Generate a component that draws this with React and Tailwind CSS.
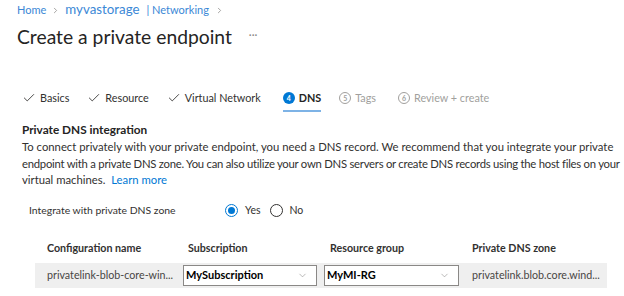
import { ChevronRight, ChevronDown, Check } from 'lucide-react';

const font = { fontFamily: 'Lato, "Noto Sans", sans-serif' };

const Step = ({ done, num, label, active, muted, className = '' }) => (
  <div className={`relative flex items-center gap-[4px] h-[26px] ${muted ? 'text-[#a19f9d]' : 'text-[#323130]'} ${className}`}>
    {done && <Check className="w-[14px] h-[14px]" strokeWidth={1.5} />}
    {num && (
      <span
        className={`flex items-center justify-center w-[12px] h-[12px] rounded-full text-[7px] font-bold ${
          active ? 'bg-[#0078d4] text-white' : 'border border-[#a19f9d] text-[#a19f9d]'
        }`}
      >
        {num}
      </span>
    )}
    <span className={`text-[10.8px] ${active ? 'font-bold text-[#252423]' : ''}`}>{label}</span>
    {active && <span className="absolute left-0 right-0 bottom-[-1px] h-[2px] bg-[#7eb3e6]" />}
  </div>
);

const Select = ({ value, width }) => (
  <div className={`flex items-center justify-between h-[21px] ${width} bg-white border border-[#8a8886] pl-[2px] pr-[8px]`}>
    <span className="text-[11px] font-bold text-black">{value}</span>
    <ChevronDown className="w-[11px] h-[11px] text-[#8a8886]" strokeWidth={1.25} />
  </div>
);

export default function App() {
  return (
    <div className="w-[624px] h-[296px] bg-white overflow-hidden text-[#323130]" style={font}>
      <div className="pl-[17px]">
        <div className="flex items-center h-[20px] text-[#3b88d6]">
          <span className="text-[11px]">Home</span>
          <ChevronRight className="ml-[5px] w-[9px] h-[9px] text-[#8a8886]" />
          <span className="text-[13.3px] ml-[5px]">myvastorage</span>
          <span className="text-[11px] ml-[7px]">| Networking</span>
          <ChevronRight className="ml-[6px] w-[9px] h-[9px] text-[#8a8886]" />
        </div>
        <div className="flex items-center h-[34px]">
          <h1 className="text-[19.3px] text-[#252423]">Create a private endpoint</h1>
          <span className="ml-[17px] text-[11px] text-[#8a8886] -mt-[4px]">···</span>
        </div>
      </div>

      <div className="flex items-center gap-[18px] pl-[22px] mt-[31px]">
        <Step done label="Basics" />
        <Step done label="Resource" />
        <Step done label="Virtual Network" />
        <Step num="4" label="DNS" active className="ml-[4px]" />
        <Step num="5" label="Tags" muted />
        <Step num="6" label="Review + create" muted className="ml-[4px]" />
      </div>

      <div className="pl-[22px] mt-[11px]">
        <h2 className="text-[11.8px] leading-[16px] font-bold text-[#252423]">Private DNS integration</h2>
        <p className="text-[11.3px] leading-[16.5px] mt-[1px] text-[#323130] whitespace-nowrap">
          To connect privately with your private endpoint, you need a DNS record. We recommend that you integrate your private
          <br />
          <span className="tracking-[-0.25px]">
            endpoint with a private DNS zone. You can also utilize your own DNS servers or create DNS records using the host files on your
          </span>
          <br />
          virtual machines. <span className="text-[#0078d4] ml-[3px]">Learn more</span>
        </p>
      </div>

      <div className="flex items-center pl-[29px] mt-[12px] h-[20px]">
        <span className="w-[196px] text-[10.4px]">Integrate with private DNS zone</span>
        <div className="flex items-center gap-[7px]">
          <span className="flex items-center justify-center w-[13px] h-[13px] rounded-full border border-[#0078d4]">
            <span className="w-[7px] h-[7px] rounded-full bg-[#0078d4]" />
          </span>
          <span className="text-[10.5px]">Yes</span>
          <span className="ml-[2px] w-[13px] h-[13px] rounded-full border border-[#323130]" />
          <span className="text-[10.5px]">No</span>
        </div>
      </div>

      <div className="ml-[35px] w-[572px] mt-[19px]">
        <div className="grid grid-cols-[141px_142px_142px_147px] h-[16px] items-center text-[10.7px] font-bold text-[#323130]">
          <span className="pl-[12px]">Configuration name</span>
          <span className="pl-[12px]">Subscription</span>
          <span className="pl-[12px]">Resource group</span>
          <span className="pl-[12px]">Private DNS zone</span>
        </div>
        <div className="grid grid-cols-[141px_142px_142px_147px] h-[25px] items-center bg-[#efefef] text-[10.7px] text-[#484644] mt-[7px]">
          <span className="pl-[12px] whitespace-nowrap">privatelink-blob-core-win...</span>
          <div className="pl-[7px]"><Select value="MySubscription" width="w-[134px]" /></div>
          <div className="pl-[6px]"><Select value="MyMI-RG" width="w-[135px]" /></div>
          <span className="pl-[12px] whitespace-nowrap">privatelink.blob.core.wind...</span>
        </div>
      </div>
    </div>
  );
}
